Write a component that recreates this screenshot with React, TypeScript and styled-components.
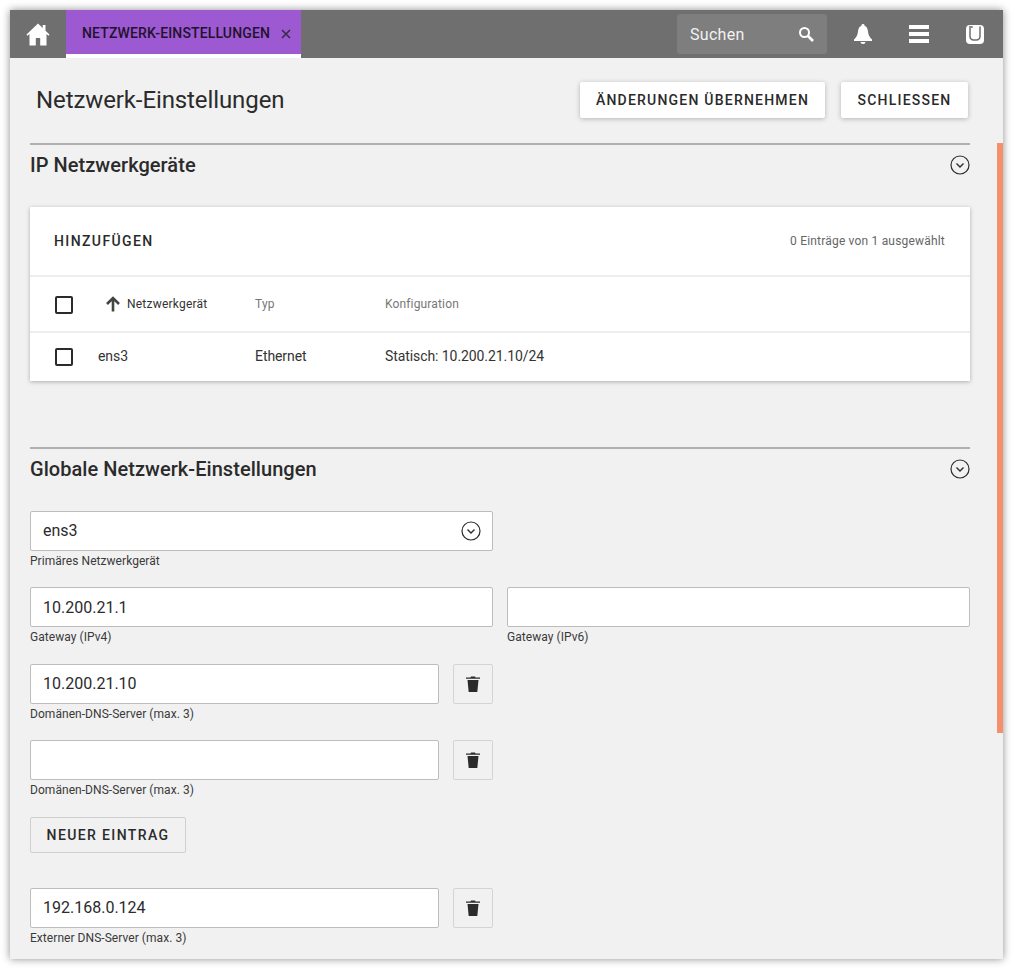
import React from 'react'
import styled, { createGlobalStyle } from 'styled-components'

const GlobalStyle = createGlobalStyle`
  html, body {
    margin: 0;
    padding: 0;
    background: #fff;
  }
  body {
    font-family: Roboto, "Liberation Sans", sans-serif;
    color: #2a2a2a;
  }
  * {
    box-sizing: border-box;
  }
`

const Page = styled.div`
  width: 1013px;
  height: 969px;
  padding: 10px;
  overflow: hidden;
`

const Window = styled.div`
  position: relative;
  width: 993px;
  height: 949px;
  background: #f1f1f1;
  overflow: hidden;
  box-shadow: 0 0 8px rgba(0, 0, 0, 0.45);
`

const TopBar = styled.header`
  display: flex;
  align-items: stretch;
  height: 48px;
  background: #6f6f6f;
`

const HomeButton = styled.div`
  width: 56px;
  display: flex;
  align-items: center;
  justify-content: center;
`

const Tab = styled.div`
  width: 235px;
  height: 48px;
  display: flex;
  align-items: center;
  padding: 2px 10px 0 16px;
  background: #9c59d1;
  border-bottom: 4px solid #fff;
  color: #22122e;
  font-size: 14px;
  font-weight: 500;
  letter-spacing: 0.14px;
  white-space: nowrap;
`

const TabClose = styled.svg`
  margin-left: auto;
  margin-top: 1px;
`

const Search = styled.div`
  margin: 4px 0 4px auto;
  width: 150px;
  display: flex;
  align-items: center;
  justify-content: space-between;
  padding: 0 13px;
  background: #7e7e7e;
  border-radius: 3px;
  color: #f2f2f2;
  font-size: 16px;
  letter-spacing: 0.3px;
`

const BarIcons = styled.div`
  display: flex;
  align-items: center;
  margin-left: 27px;
  margin-right: 19px;
  gap: 37px;
`

const Content = styled.main`
  padding: 0 33px 0 20px;
`

const TitleRow = styled.div`
  height: 85px;
  display: flex;
  align-items: flex-start;
  gap: 16px;
  padding: 24px 2px 0 6px;
`

const Title = styled.h1`
  margin: 0 auto 0 0;
  font-size: 24px;
  line-height: 36px;
  font-weight: 400;
  letter-spacing: -0.1px;
  color: #2b2b2b;
`

const RaisedButton = styled.div<{ $width: number }>`
  width: ${(p) => p.$width}px;
  height: 36px;
  display: flex;
  align-items: center;
  justify-content: center;
  background: #fff;
  border-radius: 2px;
  box-shadow: 0 1px 5px rgba(0, 0, 0, 0.25);
  font-size: 14px;
  font-weight: 500;
  letter-spacing: 1.22px;
  white-space: nowrap;
`

const SectionHead = styled.div`
  height: 42px;
  display: flex;
  align-items: center;
  justify-content: space-between;
  border-top: 2px solid #b0b0b0;
  font-size: 20px;
  font-weight: 500;
  letter-spacing: 0.05px;
  color: #2b2b2b;
`

const Card = styled.section`
  margin-top: 22px;
  background: #fff;
  box-shadow: 0 1px 4px rgba(0, 0, 0, 0.28);
`

const CardTool = styled.div`
  height: 68px;
  display: flex;
  align-items: center;
  justify-content: space-between;
  padding: 0 25px 0 24px;
  font-size: 14px;
  font-weight: 500;
  letter-spacing: 1.4px;
`

const Count = styled.span`
  font-size: 12px;
  font-weight: 400;
  letter-spacing: 0.19px;
  color: #666;
`

const TableRow = styled.div<{ $height: number }>`
  height: ${(p) => p.$height}px;
  display: grid;
  grid-template-columns: 68px 157px 130px 1fr;
  align-items: center;
  border-top: 2px solid #ededed;
  font-size: 14px;
  color: #333;
`

const Check = styled.span<{ $nudge?: number }>`
  justify-self: start;
  margin-left: 25px;
  margin-top: ${(p) => p.$nudge ?? 0}px;
  width: 18px;
  height: 18px;
  border: 2px solid #2b2b2b;
  border-radius: 2px;
`

const SortCell = styled.span`
  display: flex;
  align-items: center;
  gap: 6px;
  padding-left: 7px;
  font-size: 12px;
  letter-spacing: 0.22px;
  color: #333;
`

const HeadCell = styled.span`
  font-size: 12px;
  letter-spacing: 0.15px;
  color: #777;
`

const BodyCell = styled.span`
  padding-bottom: 2px;
  letter-spacing: -0.08px;
`

const Section2 = styled.div`
  margin-top: 66px;
`

const Form = styled.div`
  padding-top: 21.5px;
`

const Row = styled.div`
  display: grid;
  grid-template-columns: 463px 463px;
  column-gap: 14px;
  height: 76.5px;
`

const InputRow = styled.div`
  display: flex;
  gap: 14px;
  width: 463px;
  height: 76.5px;
`

const Field = styled.div`
  flex: 1;
`

const InputBox = styled.div`
  height: 40px;
  display: flex;
  align-items: center;
  justify-content: space-between;
  padding: 0 11px 0 12px;
  background: #fff;
  border: 1px solid #bdbdbd;
  border-radius: 2px;
  font-size: 16px;
  color: #2b2b2b;
`

const Hint = styled.div`
  margin-top: 3px;
  font-size: 12px;
  line-height: 14px;
  letter-spacing: 0.05px;
  color: #3a3a3a;
`

const TrashButton = styled.div`
  width: 40px;
  height: 40px;
  display: flex;
  align-items: center;
  justify-content: center;
  border: 1px solid #d4d4d4;
  border-radius: 2px;
  background: #f1f1f1;
`

const FlatButton = styled.div`
  width: 156px;
  height: 36px;
  margin: 0 0 35px;
  display: flex;
  align-items: center;
  justify-content: center;
  border: 1px solid #cfcfcf;
  border-radius: 2px;
  font-size: 14px;
  font-weight: 500;
  letter-spacing: 1.38px;
  color: #2b2b2b;
`

const ScrollThumb = styled.div`
  position: absolute;
  top: 133px;
  right: 0;
  width: 6px;
  height: 590px;
  background: #f4906c;
`

const Chevron = () => (
  <svg width="20" height="20" viewBox="0 0 20 20" fill="none" stroke="#2b2b2b">
    <circle cx="10" cy="10" r="9" strokeWidth="1.2" />
    <path d="M6.5 8.6 10 12l3.5-3.4" strokeWidth="1.4" />
  </svg>
)

const Trash = () => (
  <svg width="14" height="16" viewBox="0 0 14 16" fill="#2b2b2b">
    <path d="M5 0.5h4l.5 1H14v1.300H0V1.500h4.500z" />
    <path d="M1.500 4h11l-1.200 12H2.700z" />
  </svg>
)

const App: React.FC = () => {
  return (
    <Page>
      <GlobalStyle />
      <Window>
        <TopBar>
          <HomeButton>
            <svg width="24" height="23" viewBox="0 0 24 23" fill="#fff">
              <path d="M12 0.500 0.500 11.500l1 1.200L3.500 11v11.500h6.300V15h4.400v7.500h6.300V11l2 1.700 1-1.200-4-3.800V2h-2.800v3z" />
            </svg>
          </HomeButton>
          <Tab>
            NETZWERK-EINSTELLUNGEN
            <TabClose width="10" height="10" viewBox="0 0 10 10" stroke="#3a2a48" strokeWidth="1.600">
              <path d="M1 1l8 8M9 1l-8 8" />
            </TabClose>
          </Tab>
          <Search>
            Suchen
            <svg width="16" height="16" viewBox="0 0 16 16" fill="none" stroke="#fff">
              <circle cx="6.500" cy="6.500" r="4.500" strokeWidth="2" />
              <path d="M10 10l5 5" strokeWidth="2.600" />
            </svg>
          </Search>
          <BarIcons>
            <svg width="18" height="20" viewBox="0 0 18 20" fill="#fff">
              <path d="M9 0a1.500 1.500 0 0 1 1.500 1.700C12.700 2.500 13.700 4.600 14 7.500c.4 3.500 1.500 5.700 4 8V17H0v-1.500c2.500-2.300 3.600-4.500 4-8C4.300 4.600 5.300 2.500 7.500 1.700A1.500 1.500 0 0 1 9 0z" />
              <path d="M6.500 18h5a2.500 2 0 0 1-5 0z" />
            </svg>
            <svg width="20" height="18" viewBox="0 0 20 18" fill="#fff">
              <rect width="20" height="4" />
              <rect y="7" width="20" height="4" />
              <rect y="14" width="20" height="4" />
            </svg>
            <svg width="18" height="19" viewBox="0 0 18 19" fill="none">
              <rect width="18" height="19" rx="4" fill="#fff" />
              <path d="M4 3V11.500A3.500 3.500 0 0 0 7.500 15h3A3.500 3.500 0 0 0 14 11.500V1.500" stroke="#6f6f6f" strokeWidth="1.500" />
              <path d="M3.300 2.200H6.500V1.800H3.300z" fill="#6f6f6f" stroke="#6f6f6f" />
            </svg>
          </BarIcons>
        </TopBar>
        <Content>
          <TitleRow>
            <Title>Netzwerk-Einstellungen</Title>
            <RaisedButton $width={245}>ÄNDERUNGEN ÜBERNEHMEN</RaisedButton>
            <RaisedButton $width={127}>SCHLIESSEN</RaisedButton>
          </TitleRow>
          <SectionHead>
            IP Netzwerkgeräte
            <Chevron />
          </SectionHead>
          <Card>
            <CardTool>
              HINZUFÜGEN
              <Count>0 Einträge von 1 ausgewählt</Count>
            </CardTool>
            <TableRow $height={56}>
              <Check $nudge={2} />
              <SortCell>
                <svg width="16" height="16" viewBox="0 0 16 16" fill="none" stroke="#444" strokeWidth="2.600">
                  <path d="M8 15.500V2M2 8l6-6 6 6" />
                </svg>
                Netzwerkgerät
              </SortCell>
              <HeadCell>Typ</HeadCell>
              <HeadCell>Konfiguration</HeadCell>
            </TableRow>
            <TableRow $height={50}>
              <Check />
              <BodyCell>ens3</BodyCell>
              <BodyCell>Ethernet</BodyCell>
              <BodyCell>Statisch: 10.200.21.10/24</BodyCell>
            </TableRow>
          </Card>
          <Section2>
            <SectionHead>
              Globale Netzwerk-Einstellungen
              <Chevron />
            </SectionHead>
            <Form>
              <Row>
                <Field>
                  <InputBox>
                    ens3
                    <Chevron />
                  </InputBox>
                  <Hint>Primäres Netzwerkgerät</Hint>
                </Field>
              </Row>
              <Row>
                <Field>
                  <InputBox>10.200.21.1</InputBox>
                  <Hint>Gateway (IPv4)</Hint>
                </Field>
                <Field>
                  <InputBox />
                  <Hint>Gateway (IPv6)</Hint>
                </Field>
              </Row>
              <InputRow>
                <Field>
                  <InputBox>10.200.21.10</InputBox>
                  <Hint>Domänen-DNS-Server (max. 3)</Hint>
                </Field>
                <TrashButton>
                  <Trash />
                </TrashButton>
              </InputRow>
              <InputRow>
                <Field>
                  <InputBox />
                  <Hint>Domänen-DNS-Server (max. 3)</Hint>
                </Field>
                <TrashButton>
                  <Trash />
                </TrashButton>
              </InputRow>
              <FlatButton>NEUER EINTRAG</FlatButton>
              <InputRow>
                <Field>
                  <InputBox>192.168.0.124</InputBox>
                  <Hint>Externer DNS-Server (max. 3)</Hint>
                </Field>
                <TrashButton>
                  <Trash />
                </TrashButton>
              </InputRow>
            </Form>
          </Section2>
        </Content>
        <ScrollThumb />
      </Window>
    </Page>
  )
}

export default App
